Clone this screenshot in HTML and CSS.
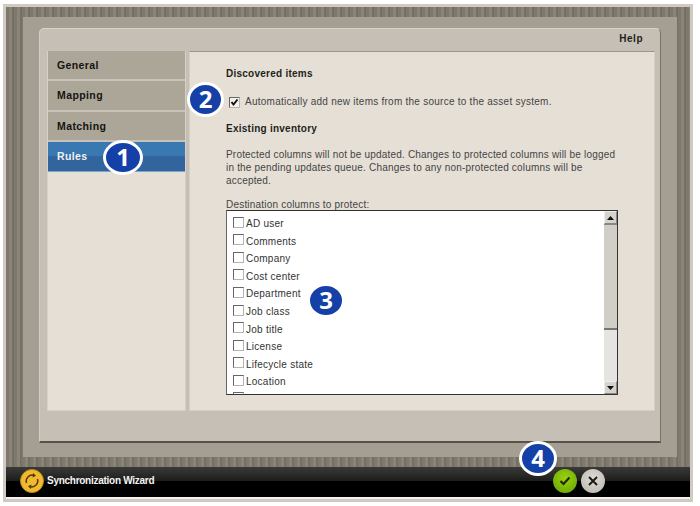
FILE: index.html
```html
<!DOCTYPE html>
<html lang="en">
<head>
<meta charset="utf-8">
<title>Synchronization Wizard</title>
<link rel="stylesheet" href="styles.css">
</head>
<body>
<div class="app">
  <div class="stage">
    <div class="inner">
      <div class="card">
        <div class="help-row">Help</div>
        <div class="columns">
          <nav class="nav">
            <div class="tab">General</div>
            <div class="tab">Mapping</div>
            <div class="tab">Matching</div>
            <div class="tab active">Rules</div>
          </nav>
          <main class="panel">
            <h2 class="heading">Discovered items</h2>
            <label class="auto"><span class="box checked"><svg viewBox="0 0 9 9" width="9" height="9"><path d="M1.5 4 L3.5 6.5 L7.5 1.5" fill="none" stroke="#111" stroke-width="2"/></svg></span>Automatically add new items from the source to the asset system.</label>
            <h2 class="heading second">Existing inventory</h2>
            <p class="para">Protected columns will not be updated. Changes to protected columns will be logged in the pending updates queue. Changes to any non-protected columns will be accepted.</p>
            <div class="list-label">Destination columns to protect:</div>
            <div class="list">
              <div class="rows">
                <div class="row"><span class="box"></span>AD user</div>
                <div class="row"><span class="box"></span>Comments</div>
                <div class="row"><span class="box"></span>Company</div>
                <div class="row"><span class="box"></span>Cost center</div>
                <div class="row"><span class="box"></span>Department</div>
                <div class="row"><span class="box"></span>Job class</div>
                <div class="row"><span class="box"></span>Job title</div>
                <div class="row"><span class="box"></span>License</div>
                <div class="row"><span class="box"></span>Lifecycle state</div>
                <div class="row"><span class="box"></span>Location</div>
                <div class="row"><span class="box"></span></div>
              </div>
              <div class="scrollbar">
                <div class="arrow"><svg viewBox="0 0 7 4" width="7" height="4"><path d="M3.5 0 L7 4 L0 4 Z" fill="#111"/></svg></div>
                <div class="thumb"></div>
                <div class="track"></div>
                <div class="arrow"><svg viewBox="0 0 7 4" width="7" height="4"><path d="M0 0 L7 0 L3.5 4 Z" fill="#111"/></svg></div>
              </div>
            </div>
          </main>
        </div>
      </div>
    </div>
  </div>
  <footer class="bar">
    <svg class="sync" viewBox="0 0 24 24" width="24" height="24">
      <circle cx="12" cy="12" r="11.5" fill="#f3b92e" stroke="#b98a1c"/>
      <path d="M6.5 14 A6 6 0 0 1 14 6.4 M17.5 10 A6 6 0 0 1 10 17.6" fill="none" stroke="#4a3a10" stroke-width="1.4"/>
      <path d="M13 4 L16 6.8 L12.6 8.6 Z M11 20 L8 17.2 L11.4 15.4 Z" fill="#4a3a10"/>
    </svg>
    <span class="bar-title">Synchronization Wizard</span>
    <span class="round ok"><svg viewBox="0 0 12 10" width="12" height="10"><path d="M1.5 5 L4.5 8 L10.5 1.5" fill="none" stroke="#1c2a08" stroke-width="2.2"/></svg></span>
    <span class="round cancel"><svg viewBox="0 0 10 10" width="10" height="10"><path d="M1 1 L9 9 M9 1 L1 9" fill="none" stroke="#1a1a1a" stroke-width="2"/></svg></span>
  </footer>
  <span class="badge b1">1</span>
  <span class="badge b2">2</span>
  <span class="badge b3">3</span>
  <span class="badge b4">4</span>
</div>
</body>
</html>
```
FILE: styles.css
```css
* { box-sizing: border-box; }
html, body { margin: 0; padding: 0; background: #fff; }
body { width: 700px; height: 506px; overflow: hidden; font-family: "Liberation Sans", Arial, sans-serif; }
.app {
  position: relative;
  width: 690px;
  height: 498px;
  margin: 4px 0 0 3px;
  border: 3px solid #cfcac2;
  background: #cfcac2;
}
.stage {
  height: 460px;
  background: repeating-linear-gradient(90deg, #7e786d 0 3px, #8a8478 3px 6px, #767064 6px 8px);
  padding: 10px 13px 0 17px;
}
.inner {
  height: 440px;
  background: #a49e93;
  padding: 11px 0 0 16px;
}
.card {
  width: 622px;
  height: 415px;
  background: #c6bfb5;
  border-radius: 5px 5px 0 0;
  border-top: 1px solid #d8d3ca;
  border-left: 1px solid #d4cfc6;
  border-right: 1px solid #77736a;
  border-bottom: 2px solid #56534b;
  padding: 0 5px 0 7px;
}
.help-row {
  height: 22px;
  text-align: right;
  font-size: 10px;
  font-weight: bold;
  line-height: 20px;
  color: #1e1e1a;
  letter-spacing: 0.5px;
  padding-right: 12px;
}
.columns { display: flex; gap: 3px; height: 360px; }
.nav {
  width: 139px;
  background: #e6dfd6;
  border: 1px solid #d6d0c6;
  border-top: 0;
}
.tab {
  height: 30.3px;
  background: #aca699;
  border-bottom: 2px solid #c8c2b8;
  padding-left: 9px;
  font-size: 10.5px;
  font-weight: bold;
  line-height: 28px;
  letter-spacing: 0.4px;
  color: #141410;
}
.tab.active {
  background: linear-gradient(#3978b1 0 50%, #32659d 50% 100%);
  color: #f2f2f2;
  border-bottom: 1px solid #7fa4c6;
}
.panel {
  width: 466px;
  background: #e6dfd6;
  border: 1px solid #d4cec4;
  border-top: 1px solid #9b968c;
  padding: 15px 36px 0 36px;
  color: #444;
  font-size: 10px;
  letter-spacing: 0.25px;
}
.heading {
  margin: 0;
  font-size: 10px;
  font-weight: bold;
  color: #1f1f1b;
  line-height: 14px;
  letter-spacing: 0.25px;
}
.auto { display: flex; align-items: center; height: 14px; margin-top: 14px; line-height: 14px; padding-left: 3px; }
.box {
  flex: none;
  display: inline-flex;
  align-items: center;
  justify-content: center;
  width: 11px;
  height: 11px;
  margin-right: 5px;
  background: #fff;
  border: 1px solid #666;
  border-right-color: #b4b4b4;
  border-bottom-color: #b4b4b4;
}
.box.checked { background: #f4f1ec; }
.second { margin-top: 13px; }
.para { margin: 12px 0 0; line-height: 13px; width: 395px; letter-spacing: 0.19px; }
.list-label { margin-top: 12px; line-height: 11px; letter-spacing: 0.2px; }
.list {
  display: flex;
  width: 392px;
  height: 185px;
  background: #fff;
  border: 1px solid #333;
  border-left-color: #666;
  overflow: hidden;
}
.rows { flex: 1; padding: 4px 0 0 6px; color: #333; overflow: hidden; }
.row { display: flex; align-items: center; height: 17.55px; }
.row .box { margin-top: -3px; margin-right: 2px; }
.scrollbar {
  width: 13px;
  display: flex;
  flex-direction: column;
  background: #e6e4e0;
}
.arrow {
  flex: none;
  height: 13px;
  display: flex;
  align-items: center;
  justify-content: center;
  background: #d6d3cd;
  border: 1px solid #eee;
  border-right-color: #888;
  border-bottom-color: #888;
}
.thumb { flex: none; height: 106px; background: #d1cec8; border-top: 1px solid #888; border-bottom: 2px solid #777; }
.track { flex: 1; background: #e6e4e0; }
.bar {
  display: flex;
  align-items: center;
  height: 32px;
  background: linear-gradient(#3a3a38 0, #1c1c1a 14px, #000 14px, #000 30px, #f2f2f0 30px);
  padding: 0 0 5px 14px;
}
.sync { flex: none; margin-right: 3px; }
.bar-title { font-size: 10px; font-weight: bold; color: #f4f4f4; letter-spacing: -0.27px; flex: 1; }
.round {
  display: flex;
  align-items: center;
  justify-content: center;
  width: 24px;
  height: 24px;
  border-radius: 50%;
}
.ok { background: radial-gradient(circle at 50% 40%, #9ed20e, #62a006); margin-right: 4px; }
.cancel { background: radial-gradient(circle at 50% 40%, #dedbd4, #b8b4ac); margin-right: 85px; }
.badge {
  position: absolute;
  width: 38px;
  height: 35px;
  border-radius: 50%;
  background: #1440a8;
  border: 3px solid #fff;
  color: #fff;
  font-family: "Open Sans", "Liberation Sans", sans-serif;
  font-weight: bold;
  font-size: 24px;
  line-height: 28px;
  text-align: center;
}
.b1 { left: 97px; top: 133px; width: 40px; }
.b2 { left: 181px; top: 75px; width: 37px; }
.b3 { left: 301px; top: 276px; }
.b4 { left: 513px; top: 434px; }
```
